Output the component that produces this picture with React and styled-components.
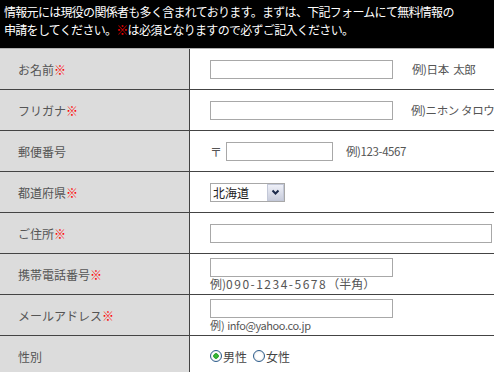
import React from "react";
import styled, { createGlobalStyle } from "styled-components";

const Global = createGlobalStyle`
  html, body { margin: 0; padding: 0; background: #fff; }
  body { font-family: "Noto Sans CJK JP", "Noto Sans", sans-serif; font-size: 12px; }
  * { box-sizing: border-box; }
`;

const Page = styled.div`
  width: 494px;
  overflow: hidden;
`;

const Header = styled.div`
  background: #000;
  color: #fff;
  height: 48px;
  padding: 3px 0 0 4px;
  font-size: 12px;
  line-height: 18px;
  letter-spacing: -0.7px;
  white-space: nowrap;
`;

const Req = styled.span`
  color: #ff0000;
`;

const Table = styled.div`
  display: grid;
  grid-template-columns: 190px 1fr;
  border-top: 1px solid #b0b0b0;
  width: 520px;
`;

const Label = styled.div`
  background: #dcdcdc;
  color: #555;
  height: 41px;
  border-bottom: 1px solid #444;
  border-right: 1px solid #444;
  display: flex;
  align-items: center;
  padding-left: 18px;
  font-size: 12px;
`;

const Cell = styled.div`
  height: 41px;
  border-bottom: 1px solid #444;
  display: flex;
  flex-direction: ${(p) => (p.$stack ? "column" : "row")};
  align-items: ${(p) => (p.$stack ? "flex-start" : "center")};
  padding: ${(p) => (p.$stack ? "4px 0 0 20px" : "0 0 0 20px")};
  color: #555;
  font-size: 12px;
`;

const TextInput = styled.input`
  width: ${(p) => p.$w}px;
  height: 19px;
  border: 1px solid #a8a8a8;
  background: #fff;
  padding: 0 2px;
  margin: 0;
  outline: none;
  font: inherit;
`;

const Example = styled.span`
  margin-left: ${(p) => p.$gap}px;
  color: #555;
  white-space: nowrap;
  font-size: 11.5px;
  letter-spacing: -0.4px;
`;

const Note = styled.div`
  color: #555;
  white-space: nowrap;
  line-height: 13px;
  font-size: ${(p) => p.$size || 12}px;
  margin-top: ${(p) => p.$top || 0}px;
`;

const Spaced = styled.span`
  letter-spacing: ${(p) => p.$ls}px;
`;

const Postal = styled.span`
  color: #555;
  margin-right: 4px;
`;

const SelectWrap = styled.div`
  display: flex;
  width: 75px;
  height: 19px;
  border: 1px solid #a8a8a8;
  background: #fff;
`;

const Select = styled.select`
  appearance: none;
  -webkit-appearance: none;
  border: none;
  outline: none;
  background: transparent;
  width: 56px;
  height: 100%;
  padding: 0 0 0 2px;
  margin: 0;
  font: inherit;
  font-size: 12px;
  color: #222;
`;

const ArrowBox = styled.div`
  width: 17px;
  height: 17px;
  border: 1px solid #c3c8d8;
  background: linear-gradient(#eef0f8, #c9cddc);
  display: flex;
  align-items: center;
  justify-content: center;
`;

const RadioGroup = styled.label`
  display: inline-flex;
  align-items: center;
  margin-right: 6px;
  color: #444;
  font-size: 12px;
`;

const Radio = styled.input`
  appearance: none;
  -webkit-appearance: none;
  width: 12px;
  height: 12px;
  margin: 0 1px 0 0;
  border-radius: 50%;
  border: 1px solid #2c5c8c;
  background: ${(p) =>
    p.checked
      ? "radial-gradient(circle, #3bbf3b 0, #2ea52e 2.5px, #fff 3px, #e6e6e6 100%)"
      : "radial-gradient(circle, #fff 0, #fff 40%, #dcdcdc 100%)"};
`;

const Row = ({ label, req, children, stack }) => (
  <>
    <Label>
      {label}
      {req && <Req>※</Req>}
    </Label>
    <Cell $stack={stack}>{children}</Cell>
  </>
);

export default function App() {
  return (
    <Page>
      <Global />
      <Header>
        情報元には現役の関係者も多く含まれております。まずは、下記フォームにて無料情報の
        <br />
        申請をしてください。<Req>※</Req>は必須となりますので必ずご記入ください。
      </Header>
      <Table>
        <Row label="お名前" req>
          <TextInput $w={183} />
          <Example $gap={19}>例)日本&nbsp;&nbsp;太郎</Example>
        </Row>
        <Row label="フリガナ" req>
          <TextInput $w={183} />
          <Example $gap={18}>例)ニホン&nbsp;タロウ</Example>
        </Row>
        <Row label="郵便番号">
          <Postal>〒</Postal>
          <TextInput $w={107} />
          <Example $gap={13}>例)123-4567</Example>
        </Row>
        <Row label="都道府県" req>
          <SelectWrap>
            <Select defaultValue="北海道">
              <option>北海道</option>
            </Select>
            <ArrowBox>
              <svg width="9" height="7" viewBox="0 0 9 7">
                <path d="M1.5 1.5 L4.5 4.5 L7.5 1.5" fill="none" stroke="#1c2a4a" strokeWidth="2" />
              </svg>
            </ArrowBox>
          </SelectWrap>
        </Row>
        <Row label="ご住所" req>
          <TextInput $w={282} />
        </Row>
        <Row label="携帯電話番号" req stack>
          <TextInput $w={183} />
          <Note>
            例)<Spaced $ls={1.5}>090-1234-5678</Spaced>（半角）
          </Note>
        </Row>
        <Row label="メールアドレス" req stack>
          <TextInput $w={183} />
          <Note $top={1} $size={11}>
            例) <Spaced $ls={-0.4}>info@yahoo.co.jp</Spaced>
          </Note>
        </Row>
        <Row label="性別">
          <RadioGroup>
            <Radio type="radio" name="sex" defaultChecked checked readOnly />
            男性
          </RadioGroup>
          <RadioGroup>
            <Radio type="radio" name="sex" readOnly />
            女性
          </RadioGroup>
        </Row>
      </Table>
    </Page>
  );
}
